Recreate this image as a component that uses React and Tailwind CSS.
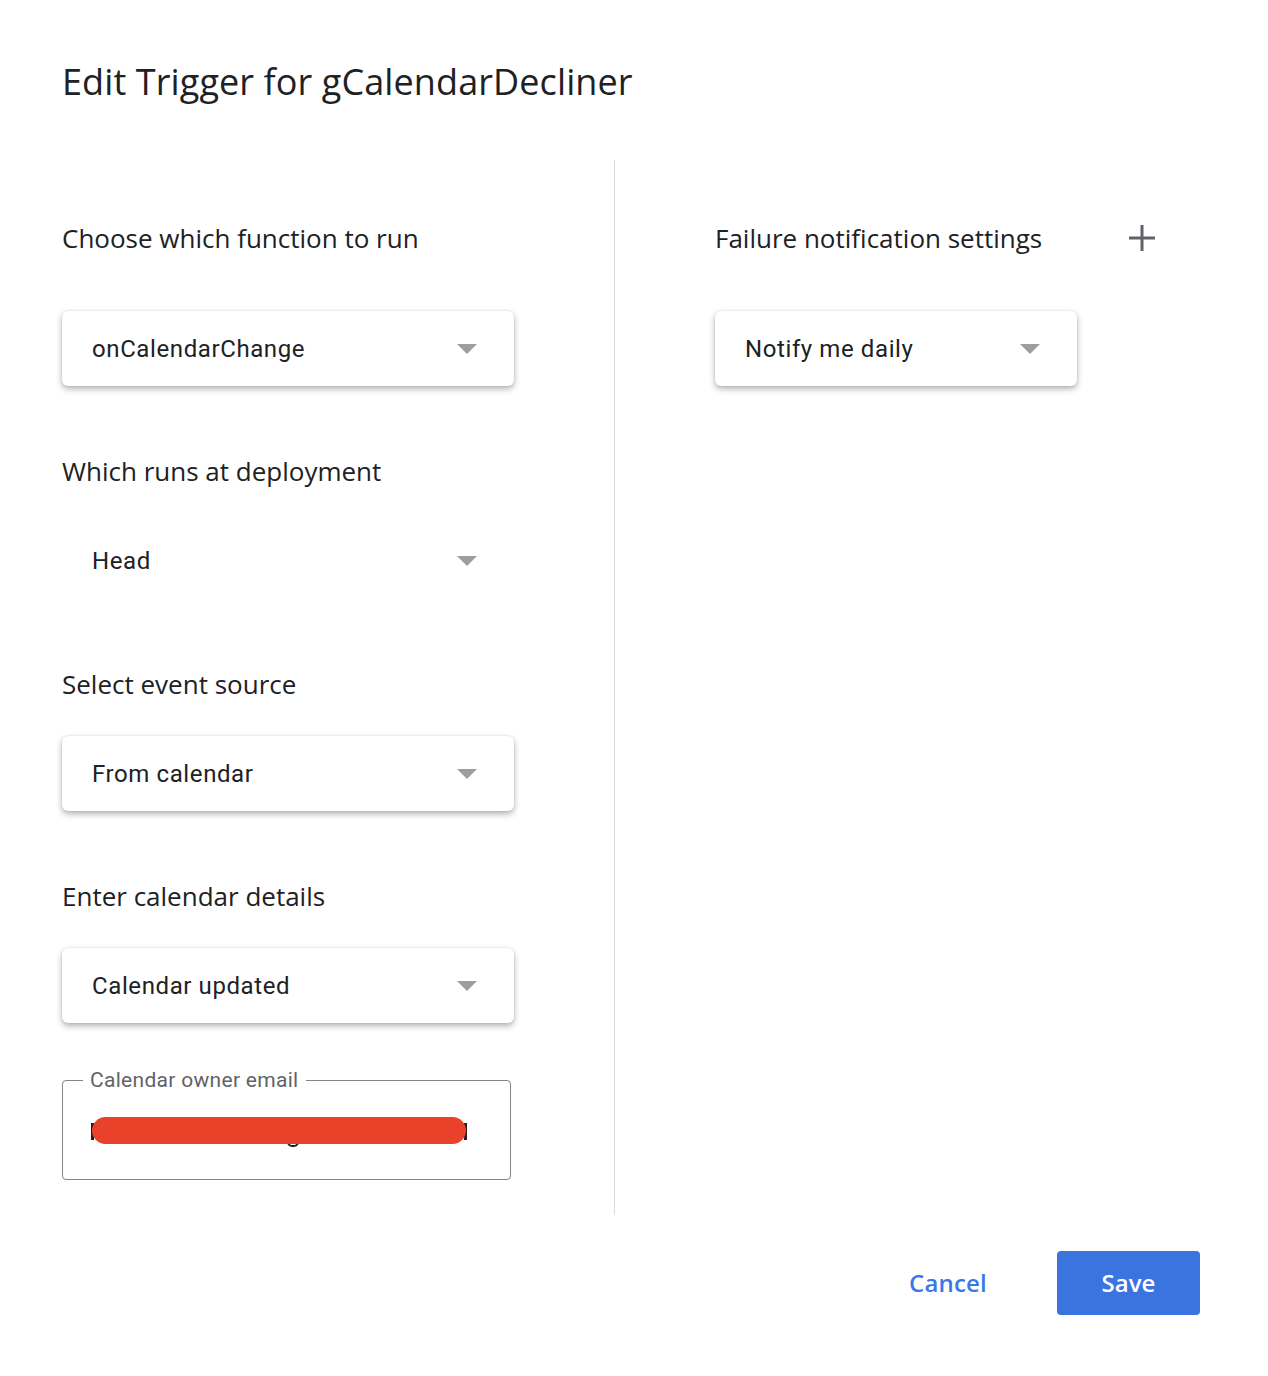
const font = { fontFamily: 'Roboto, "Liberation Sans", sans-serif' };
const sans = { fontFamily: '"Open Sans", Roboto, sans-serif' };

function Arrow() {
  return (
    <svg width="20" height="10" viewBox="0 0 20 10" className="shrink-0">
      <path d="M0 0 L20 0 L10 10 Z" fill="#9e9e9e" />
    </svg>
  );
}

function Select({ value, boxed = true, w = 'w-[452px]' }) {
  return (
    <div
      className={`${w} h-[75px] flex items-center justify-between pl-[30px] pr-[37px] rounded-[6px] bg-white ${
        boxed ? 'shadow-[0_3px_6px_rgba(0,0,0,0.3),0_0_2px_rgba(0,0,0,0.12)]' : ''
      }`}
    >
      <span className="text-[24px] text-[#202124] leading-none tracking-[0.6px]">{value}</span>
      <Arrow />
    </div>
  );
}

function Label({ children, className = '' }) {
  return (
    <div className={`text-[26px] leading-[32px] text-[#202124] ${className}`} style={sans}>
      {children}
    </div>
  );
}

export default function App() {
  return (
    <div className="w-[1268px] h-[1376px] bg-white" style={font}>
      <div className="pl-[62px] pt-[60px]">
        <h1 className="text-[36px] leading-[44px] text-[#202124] font-normal tracking-[0.1px]" style={sans}>
          Edit Trigger for gCalendarDecliner
        </h1>
      </div>

      <div className="flex mt-[56px] pl-[62px]">
        <div className="w-[552px] pt-[62px] pb-[35px]">
          <Label>Choose which function to run</Label>
          <div className="mt-[57px]">
            <Select value="onCalendarChange" />
          </div>

          <Label className="mt-[69px]">Which runs at deployment</Label>
          <div className="mt-[36px]">
            <Select value="Head" boxed={false} />
          </div>

          <Label className="mt-[70px]">Select event source</Label>
          <div className="mt-[36px]">
            <Select value="From calendar" />
          </div>

          <Label className="mt-[69px]">Enter calendar details</Label>
          <div className="mt-[36px]">
            <Select value="Calendar updated" />
          </div>

          <fieldset className="mt-[45px] w-[449px] h-[112px] border border-[#80868b] rounded-[4px] px-[28px]">
            <legend className="ml-[-8px] px-[7px] text-[21px] leading-[24px] text-[#5f6368] tracking-[0.3px]">
              Calendar owner email
            </legend>
            <div className="relative mt-[25px] h-[27px] w-[374px] ml-[1px]">
              <div className="absolute left-[-1px] top-[6px] w-[3px] h-[17px] bg-[#202124]" />
              <div className="absolute right-[-1px] top-[6px] w-[3px] h-[17px] bg-[#202124]" />
              <div className="absolute left-[195px] top-[20px] w-[12px] h-[10px] rounded-full border-2 border-[#202124]" />
              <div className="absolute inset-0 rounded-full bg-[#e9412a]" />
            </div>
          </fieldset>
        </div>

        <div className="border-l border-[#dadce0] pl-[100px] pt-[62px] w-[592px]">
          <div className="flex items-center justify-between w-[441px]">
            <Label>Failure notification settings</Label>
            <svg width="28" height="28" viewBox="0 0 28 28">
              <path d="M14 1 V27 M1 14 H27" stroke="#5f6368" strokeWidth="3" />
            </svg>
          </div>
          <div className="mt-[57px]">
            <Select value="Notify me daily" w="w-[362px]" />
          </div>
        </div>
      </div>

      <div className="flex justify-end items-center pr-[68px] mt-[36px] gap-[70px]" style={sans}>
        <button className="text-[24px] text-[#3b78e7] font-semibold tracking-[0.2px]">Cancel</button>
        <button className="w-[143px] h-[64px] rounded-[4px] bg-[#3b74df] text-white text-[24px] font-semibold">
          Save
        </button>
      </div>
    </div>
  );
}
